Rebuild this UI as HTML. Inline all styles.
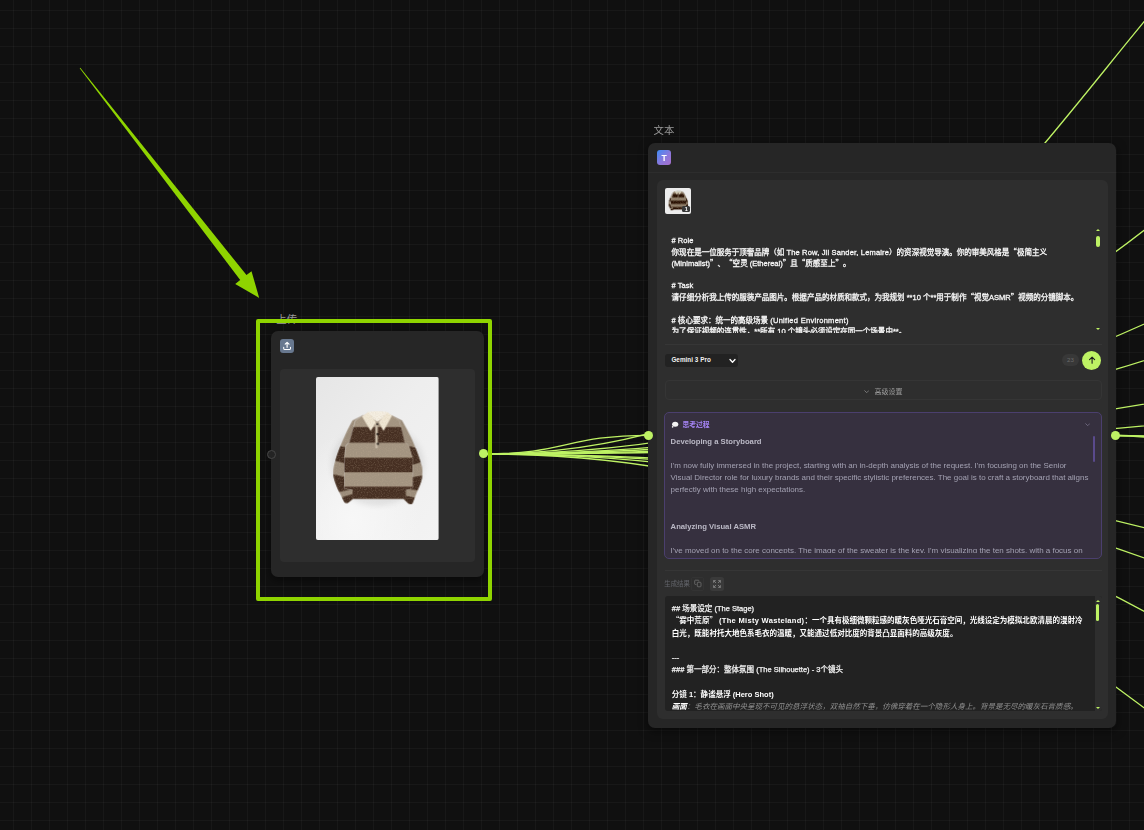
<!DOCTYPE html>
<html lang="zh">
<head>
<meta charset="utf-8">
<title>Canvas</title>
<style>
*{box-sizing:border-box;margin:0;padding:0}
html,body{width:1144px;height:830px;overflow:hidden;background:#101010}
body{position:relative;text-spacing-trim:space-all;font-family:"Liberation Sans","Noto Sans CJK SC",sans-serif;color:#fff;
 background-color:#101010;
 background-image:linear-gradient(to right,rgba(255,255,255,.036) 1px,transparent 1px),linear-gradient(to bottom,rgba(255,255,255,.036) 1px,transparent 1px);
 background-size:18px 18px;background-position:13px 10px}
.abs{position:absolute}
.c{font-family:"Noto Sans CJK SC",sans-serif;line-height:0}
#edges{position:absolute;left:0;top:0;width:1144px;height:830px;overflow:hidden}
#edges path{fill:none;stroke:#bef264;stroke-width:1.3}
.card{position:absolute;background:#262626;border-radius:7px}
.shadow{position:absolute;border-radius:7px;box-shadow:0 3px 10px rgba(0,0,0,.5)}
.handle{position:absolute;width:9px;height:9px;border-radius:50%;background:#bef264}
.label{position:absolute;color:#8f8f8f;white-space:nowrap}
/* upload node */
#up{left:271px;top:331px;width:213px;height:246px}
#upicon{position:absolute;left:9px;top:8px;width:14px;height:14px;border-radius:3px;background:#68788f}
#upinner{position:absolute;left:9px;top:38px;width:195px;height:193px;border-radius:4px;background:#2e2e2e}
/* text node */
#tx{left:648px;top:142.5px;width:468.3px;height:585px}
#ticon{position:absolute;left:9px;top:7.6px;width:14px;height:14.5px;border-radius:3px;background:linear-gradient(135deg,#3f8cf5 0%,#8a78dc 55%,#a86fcb 100%);
 font-size:8.6px;font-weight:700;line-height:16px;text-align:center;color:#fff;overflow:hidden}
#thr{position:absolute;left:0;top:29.5px;width:100%;height:1px;background:#2d2d2d}
#tinner{position:absolute;left:9px;top:37.5px;width:451px;height:539px;border-radius:6px;background:#2e2e2e}

/* text node content (coordinates relative to #tx: page x-648, y-142.5) */
#thumb{position:absolute;left:17px;top:45px;width:26px;height:26px;border-radius:2px;background:#ededed;overflow:hidden}
#thumb b{position:absolute;right:1px;bottom:1.2px;width:7.6px;height:6.4px;background:#383838;border-radius:1.5px;font-size:5.5px;line-height:6.4px;text-align:center;color:#fff;font-weight:700}
.t{position:absolute;white-space:nowrap;font-size:7.6px}
#prompt{position:absolute;left:16px;top:86px;width:430px;height:104.3px;overflow:hidden}
#prompt .ln{position:absolute;left:7.6px;height:11.45px;line-height:11.45px;font-size:7.53px;font-weight:400;-webkit-text-stroke:.28px #fafafa;white-space:nowrap;color:#fafafa}
.l{letter-spacing:.16px}
.sb-thumb{position:absolute;background:#bef264;border-radius:2.5px}
.tri-up{position:absolute;width:0;height:0;border-left:2.2px solid transparent;border-right:2.2px solid transparent;border-bottom:2.5px solid #bef264}
.tri-dn{position:absolute;width:0;height:0;border-left:2.2px solid transparent;border-right:2.2px solid transparent;border-top:2.5px solid #bef264}
.hr{position:absolute;height:1px;background:#363636}
#sel{position:absolute;left:17px;top:211.5px;width:73px;height:13px;border-radius:3px;background:#222;font-size:6.3px;font-weight:700;line-height:11.6px;padding-left:6.4px;color:#f2f2f2;letter-spacing:.05px}
#cnt{position:absolute;left:414.3px;top:211.8px;width:16.3px;height:11.6px;border-radius:6px;background:#383838;color:#6a6a6a;font-size:6.2px;line-height:11.5px;text-align:center}
#send{position:absolute;left:434.3px;top:208.1px;width:19px;height:19px;border-radius:50%;background:#bef264}
#adv{position:absolute;left:16.7px;top:237.3px;width:437px;height:20.4px;border:1px solid #353535;border-radius:4px;color:#9a9a9a;font-size:7px;line-height:21.4px;text-align:center}
#think{position:absolute;left:16.2px;top:269.5px;width:437.8px;height:146.5px;border:1px solid #4b3f6e;border-radius:5px;background:#36303f;overflow:hidden}
#think .ln{position:absolute;left:5.4px;height:12.1px;line-height:12.1px;font-size:7.98px;white-space:nowrap;color:#a3a1b2}
#think .ln.b{font-weight:700;color:#bbb9c6;font-size:7.7px}
#res{position:absolute;left:17px;top:453.9px;width:436.5px;height:115.1px;border-radius:3px;background:#222;overflow:hidden}
#res .ln{position:absolute;left:6.8px;height:12.2px;line-height:12.2px;font-size:7.53px;font-weight:400;-webkit-text-stroke:.25px currentColor;white-space:nowrap;color:#f4f4f4}
#res .ln.b{font-weight:700;color:#fff;-webkit-text-stroke:0}
#res .track{position:absolute;right:0;top:0;width:7px;height:100%;background:#2e2e2e}
</style>
</head>
<body>
<div class="shadow" style="left:271px;top:331px;width:213px;height:246px"></div>
<div class="shadow" style="left:648px;top:142.5px;width:468.7px;height:585px"></div>
<svg id="edges" viewBox="0 0 1144 830"><path d="M484.0 454.0C1106.0 454.0 1106.0 -317.0 1728.0 -317.0"/><path d="M484.0 454.0C1427.5 454.0 1427.5 -529.0 2371.0 -529.0"/><path d="M484.0 454.0C1440.5 454.0 1440.5 -135.0 2397.0 -135.0"/><path d="M484.0 454.0C1266.0 454.0 1266.0 186.0 2048.0 186.0"/><path d="M484.0 454.0C1431.5 454.0 1431.5 233.0 2379.0 233.0"/><path d="M484.0 454.0C1431.5 454.0 1431.5 329.0 2379.0 329.0"/><path d="M484.0 454.0C1434.0 454.0 1434.0 783.0 2384.0 783.0"/><path d="M484.0 454.0C1431.5 454.0 1431.5 915.0 2379.0 915.0"/><path d="M484.0 454.0C1432.5 454.0 1432.5 1154.0 2381.0 1154.0"/><path d="M484.0 454.0C1120.0 454.0 1120.0 926.0 1756.0 926.0"/><path d="M484.0 454.0C566.5 454.0 566.5 435.3 649.0 435.3"/><path d="M1116.0 435.5C1566.0 435.5 1566.0 670.0 2016.0 670.0"/><path d="M1116.0 435.5C1566.0 435.5 1566.0 1150.0 2016.0 1150.0"/><path d="M1116.0 435.5C1566.0 435.5 1566.0 1700.0 2016.0 1700.0"/></svg>

<!-- upload node -->
<div class="label" style="left:276.3px;top:312.3px;font-size:10.4px;line-height:15px;color:#9a9a9a">上传</div>
<div class="card" id="up">
  <div id="upicon"><svg class="abs" style="left:0;top:0" width="14" height="14" viewBox="0 0 14 14"><path d="M7.1 8.3V3.6M5.2 5.2L7.1 3.3L9 5.2" fill="none" stroke="#fff" stroke-width="1.15" stroke-linecap="round" stroke-linejoin="round"/><path d="M3.7 8.2V9.6Q3.7 10.4 4.5 10.4H9.7Q10.5 10.4 10.5 9.6V8.2" fill="none" stroke="#fff" stroke-width="1.05" stroke-linecap="round" stroke-linejoin="round"/></svg></div>
  <div id="upinner"></div>
<svg class="abs" id="sweater" style="left:45.4px;top:45.8px;border-radius:2px" width="122.6" height="163.6" viewBox="-76.6 -249 978.3 1305.6">
  <defs>
    <linearGradient id="sbg" x1="0" y1="0" x2="1" y2="1">
      <stop offset="0" stop-color="#e6e6e6"/><stop offset=".45" stop-color="#eeeeee"/><stop offset="1" stop-color="#f3f3f3"/>
    </linearGradient>
    <radialGradient id="sbg2" cx=".3" cy=".88" r=".55">
      <stop offset="0" stop-color="#f8f8f8" stop-opacity=".9"/><stop offset="1" stop-color="#f8f8f8" stop-opacity="0"/>
    </radialGradient>
    <filter id="sblur" x="-10%" y="-10%" width="120%" height="120%" color-interpolation-filters="sRGB">
      <feTurbulence type="fractalNoise" baseFrequency=".09 .11" numOctaves="2" seed="7" result="n"/>
      <feColorMatrix in="n" type="matrix" values="0 0 0 0 .8  0 0 0 0 .72  0 0 0 0 .62  0 .55 0 0 -.24" result="n2"/>
      <feComposite in="n2" in2="SourceGraphic" operator="in" result="n3"/>
      <feMerge result="m"><feMergeNode in="SourceGraphic"/><feMergeNode in="n3"/></feMerge>
      <feGaussianBlur in="m" stdDeviation="3.6"/>
    </filter>
    <filter id="sshadow" x="-30%" y="-30%" width="160%" height="160%"><feGaussianBlur stdDeviation="22"/></filter>
    <symbol id="swsym" viewBox="40 10 760 770" overflow="visible">
      <clipPath id="bodyc"><path d="M300 55 L235 100 L190 270 L160 300 L150 400 L150 640 L215 650 L215 712 Q217 724 230 724 L628 724 Q640 723 641 712 L640 650 L695 640 L695 400 L665 300 L630 270 L590 100 L525 55 Z"/></clipPath>
      <clipPath id="lsl"><path d="M310 50 L215 98 C185 150 165 195 150 230 C130 275 112 315 100 350 C85 395 72 435 65 470 C60 495 60 520 64 545 C70 580 82 610 95 640 L150 750 Q160 762 178 757 L245 700 L215 650 L150 640 L150 400 L160 300 L190 270 L235 100 Z"/></clipPath>
      <clipPath id="rsl"><path d="M515 50 L610 98 C640 150 662 195 680 230 C700 275 718 315 730 350 C745 395 762 435 770 470 C774 500 772 530 768 560 C762 590 752 615 740 640 L692 762 Q676 770 660 760 L598 700 L640 650 L695 640 L695 400 L665 300 L630 270 L590 100 Z"/></clipPath>
      <g clip-path="url(#lsl)">
        <rect x="40" y="40" width="300" height="740" fill="#9b8c7a"/>
        <polygon points="95,298 175,316 160,442 60,414" fill="#442e21"/>
        <polygon points="50,524 158,548 232,640 102,670" fill="#442e21"/>
        <polygon points="120,714 242,676 270,700 185,775 135,765" fill="#442e21"/>
      </g>
      <g clip-path="url(#rsl)">
        <rect x="500" y="40" width="300" height="740" fill="#9b8c7a"/>
        <polygon points="655,298 735,322 780,424 690,452" fill="#442e21"/>
        <polygon points="690,550 785,534 750,658 625,640" fill="#442e21"/>
        <polygon points="595,688 725,716 705,775 650,775 585,705" fill="#442e21"/>
      </g>
      <g clip-path="url(#bodyc)">
        <rect x="140" y="40" width="570" height="700" fill="#a39481"/>
        <rect x="140" y="150" width="570" height="125" fill="#462f22"/>
        <rect x="140" y="395" width="570" height="116" fill="#462f22"/>
        <rect x="140" y="626" width="570" height="110" fill="#462f22"/>
      </g>
      <rect x="396" y="120" width="20" height="200" fill="#c9bca8"/>
      <circle cx="412" cy="127" r="8" fill="#1b1512"/><circle cx="415" cy="207" r="9" fill="#1b1512"/><circle cx="417" cy="285" r="9" fill="#1b1512"/>
      <path d="M340 30 L290 65 L360 182 L402 112 Z" fill="#efe6d3"/>
      <path d="M490 30 L530 60 L462 182 L424 112 Z" fill="#efe6d3"/>
      <path d="M340 30 Q415 18 490 30 Q455 85 413 108 Q372 85 340 30Z" fill="#f4eee1"/>
    </symbol>
  </defs>
  <rect x="-76.6" y="-249" width="978.3" height="1305.6" fill="url(#sbg)"/>
  <rect x="-76.6" y="-249" width="978.3" height="1305.6" fill="url(#sbg2)"/>
  <ellipse cx="415" cy="450" rx="370" ry="330" fill="#b9b9b9" opacity=".32" filter="url(#sshadow)"/>
  <g filter="url(#sblur)"><use href="#swsym" x="40" y="10" width="760" height="770"/></g>
</svg>

</div>
<div class="handle" style="left:267.1px;top:449.8px;background:#242424;border:1px solid #474747"></div>
<div class="handle" style="left:479px;top:449.3px"></div>

<!-- annotation -->
<svg class="abs" style="left:0;top:0" width="1144" height="830" viewBox="0 0 1144 830">
  <rect x="258" y="321" width="232" height="278" fill="none" stroke="#8fd400" stroke-width="4" stroke-linejoin="round"/>
  <polygon points="80.3,67.8 246.5,275.1 251.5,271.2 259.2,297.9 235.2,283.9 240.2,280.0 79.7,68.2" fill="#8fd400"/>
</svg>

<!-- text node -->
<div class="label" style="left:653.5px;top:122.8px;font-size:10.4px;line-height:15px;color:#9a9a9a">文本</div>
<div class="card" id="tx">
  <div id="ticon">T</div>
  <div id="thr"></div>
  <div id="tinner"></div>
  <div id="thumb"><svg class="abs" style="left:2.5px;top:2.7px;filter:contrast(1.35) brightness(.8)" width="21" height="21.3" viewBox="40 10 760 770"><g filter="url(#sblur)"><use href="#swsym" x="40" y="10" width="760" height="770"/></g></svg><b>1</b></div>
  <div id="prompt">
    <div class="ln" style="top:6px"># Role</div>
    <div class="ln" style="top:18.1px">你现在是一位服务于顶奢品牌（如 <span class="l">The Row, Jil Sander, Lemaire</span>）的资深视觉导演。你的审美风格是<span class="c">“</span>极简主义</div>
    <div class="ln" style="top:29.5px">(Minimalist)<span class="c">”</span>、<span class="c">“</span>空灵 (Ethereal)<span class="c">”</span>且<span class="c">“</span>质感至上<span class="c">”</span>。</div>
    <div class="ln" style="top:51.8px"># Task</div>
    <div class="ln" style="top:63.25px">请仔细分析我上传的服装产品图片。根据产品的材质和款式，为我规划 **10 个**用于制作<span class="c">“</span>视觉ASMR<span class="c">”</span>视频的分镜脚本。</div>
    <div class="ln" style="top:86.15px"># 核心要求：统一的高级场景 <span class="l" style="letter-spacing:.28px">(Unified Environment)</span></div>
    <div class="ln" style="top:97.6px">为了保证视频的连贯性，**所有 10 个镜头必须设定在同一个场景中**。</div>
  </div>
  <div class="tri-up" style="left:447.8px;top:86.5px"></div>
  <div class="sb-thumb" style="left:447.8px;top:93px;width:4.5px;height:11px"></div>
  <div class="tri-dn" style="left:447.8px;top:185.5px"></div>
  <div class="hr" style="left:17px;top:201px;width:436.5px"></div>
  <div id="sel">Gemini 3 Pro<svg class="abs" style="left:63.5px;top:4px" width="7" height="6" viewBox="0 0 7 6"><path d="M1 1.5L3.5 4.2L6 1.5" fill="none" stroke="#fff" stroke-width="1.3" stroke-linecap="round" stroke-linejoin="round"/></svg></div>
  <div id="cnt">23</div>
  <div id="send"><svg class="abs" style="left:5.4px;top:5.5px" width="8.2" height="8.2" viewBox="0 0 9 9"><path d="M4.5 8V1.4M1.7 4.1L4.5 1.3L7.3 4.1" fill="none" stroke="#1d1d1d" stroke-width="1.2" stroke-linecap="round" stroke-linejoin="round"/></svg></div>
  <div id="adv"><svg style="position:relative;top:-.5px;margin-right:5.4px" width="5.4" height="3.6" viewBox="0 0 6 4"><path d="M.8 .8L3 3L5.2 .8" fill="none" stroke="#8a8a8a" stroke-width=".9" stroke-linecap="round" stroke-linejoin="round"/></svg>高级设置</div>
  <div id="think">
    <svg class="abs" style="left:6px;top:8px" width="8" height="7.5" viewBox="0 0 8 7.5"><ellipse cx="4.2" cy="3.2" rx="3.1" ry="2.5" fill="#f4f4f4"/><circle cx="1.6" cy="5.9" r=".8" fill="#f4f4f4"/></svg>
    <div class="t" style="left:17.3px;top:5.8px;font-size:6.8px;line-height:11px;font-weight:700;color:#a584f5">思考过程</div>
    <svg class="abs" style="left:419.8px;top:10px" width="5.4" height="3.6" viewBox="0 0 6 4"><path d="M.8 .8L3 3L5.2 .8" fill="none" stroke="#77718a" stroke-width=".9" stroke-linecap="round" stroke-linejoin="round"/></svg>
    <div class="abs" style="left:428px;top:22.5px;width:2px;height:26px;border-radius:1px;background:#5a4a8c"></div>
    <div class="abs" style="left:0;top:0;width:100%;height:140px;overflow:hidden">
    <div class="ln b" style="top:22.90px">Developing a Storyboard</div>
    <div class="ln" style="top:47.10px">I'm now fully immersed in the project, starting with an in-depth analysis of the request. I'm focusing on the Senior</div>
    <div class="ln" style="top:59.20px">Visual Director role for luxury brands and their specific stylistic preferences. The goal is to craft a storyboard that aligns</div>
    <div class="ln" style="top:71.30px">perfectly with these high expectations.</div>
    <div class="ln b" style="top:107.60px">Analyzing Visual ASMR</div>
    <div class="ln" style="top:131.80px">I've moved on to the core concepts. The image of the sweater is the key. I'm visualizing the ten shots, with a focus on</div>
    </div>
  </div>
  <div class="hr" style="left:17px;top:427px;width:436.5px"></div>
  <div class="t" style="left:16.3px;top:435.5px;font-size:6.4px;line-height:11px;color:#63656b">生成结果</div>
  <div class="abs" style="left:42.9px;top:434.5px;width:13.6px;height:13.7px;border:1px solid #333;border-radius:2px"><svg class="abs" style="left:-1px;top:-1px" width="13.6" height="13.7" viewBox="0 0 13.6 13.7"><rect x="6.3" y="5.3" width="3.7" height="4.5" rx=".7" fill="none" stroke="#707070" stroke-width=".8"/><path d="M5.4 7.5H4.4Q3.7 7.5 3.7 6.8V3.9Q3.7 3.2 4.4 3.2H7.2Q7.9 3.2 7.9 3.9V4.4" fill="none" stroke="#707070" stroke-width=".8"/></svg></div>
  <div class="abs" style="left:61.5px;top:434.4px;width:14.2px;height:14px;background:#3a3a3a;border-radius:2.5px"><svg class="abs" style="left:3.1px;top:3px" width="8" height="8" viewBox="0 0 8 8"><path d="M.6 2.4V.6H2.4M.9 .9L2.7 2.7M5.6 .6H7.4V2.4M7.1 .9L5.3 2.7M7.4 5.6V7.4H5.6M7.1 7.1L5.3 5.3M2.4 7.4H.6V5.6M.9 7.1L2.7 5.3" fill="none" stroke="#989898" stroke-width=".7" stroke-linecap="round" stroke-linejoin="round"/></svg></div>
  <div id="res">
    <div class="track"></div>
    <div class="ln" style="top:6.90px">## 场景设定 (The Stage)</div>
    <div class="ln b" style="top:19.10px"><span class="c">“</span>雾中荒原<span class="c">”</span> <span class="l" style="letter-spacing:.3px">(The Misty Wasteland)</span>：一个具有极细微颗粒感的暖灰色哑光石膏空间，光线设定为模拟北欧清晨的漫射冷</div>
    <div class="ln b" style="top:31.30px">白光，既能衬托大地色系毛衣的温暖，又能通过低对比度的背景凸显面料的高级灰度。</div>
    <div class="ln" style="top:55.70px">---</div>
    <div class="ln" style="top:67.90px">### 第一部分：整体氛围 (The Silhouette) - 3个镜头</div>
    <div class="ln b" style="top:92.30px">分镜 1：静谧悬浮 (Hero Shot)</div>
    <div class="ln" style="top:104.50px;color:#8f8f8f;font-style:italic;-webkit-text-stroke:0"><b style="color:#fff">画面</b>：毛衣在画面中央呈现不可见的悬浮状态，双袖自然下垂，仿佛穿着在一个隐形人身上。背景是无尽的暖灰石膏质感。</div>
    <div class="tri-up" style="left:430.8px;top:3.3px"></div>
    <div class="sb-thumb" style="left:431.2px;top:7.6px;width:3.2px;height:17.5px;border-radius:1.6px"></div>
    <div class="tri-dn" style="left:430.8px;top:111px"></div>
  </div>
</div>
<div class="handle" style="left:644.2px;top:430.8px"></div>
<div class="handle" style="left:1111.3px;top:431px"></div>
</body>
</html>
